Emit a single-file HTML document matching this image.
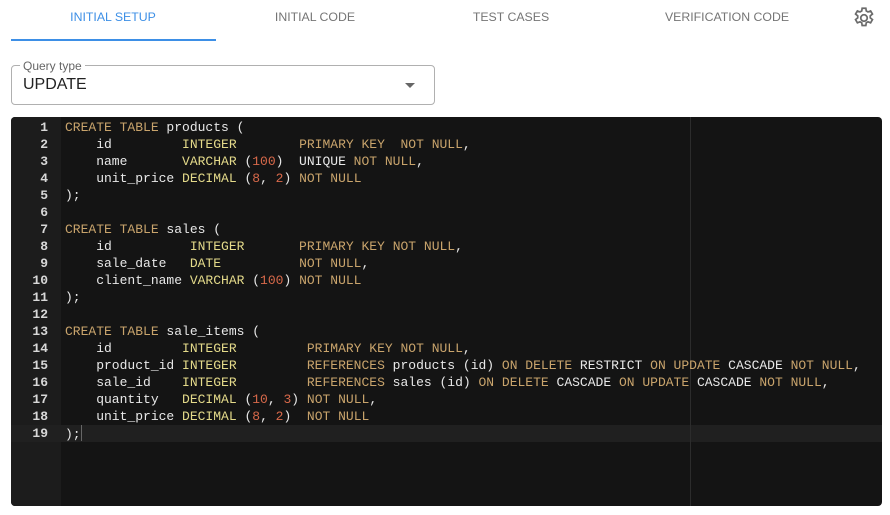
<!DOCTYPE html>
<html><head><meta charset="utf-8"><style>
body{margin:0;width:890px;height:515px;background:#fff;overflow:hidden;position:relative;font-family:"Liberation Sans",sans-serif}
.tab{position:absolute;top:10px;font-size:12.3px;color:#757575;text-align:center;width:200px}
.ul{position:absolute;left:11px;top:39px;width:205px;height:2px;background:#3d8fe6}
.sel{position:absolute;left:11px;top:65px;width:422px;height:38px;border:1px solid #b0b0b0;border-radius:4px}
.lbl{position:absolute;left:20px;top:59px;font-size:12px;color:#666;background:#fff;padding:0 3px}
.val{position:absolute;left:23px;top:76px;font-size:16px;color:#222}
.arr{position:absolute;left:405px;top:83px;width:0;height:0;border-left:5px solid transparent;border-right:5px solid transparent;border-top:5px solid #666}
.ed{position:absolute;left:11px;top:117px;width:871px;height:389px;background:#141414;border-radius:4px;overflow:hidden}
.gut{position:absolute;left:0;top:0;width:50px;height:389px;background:#1c1c1c}
.act{position:absolute;left:0;top:308px;width:871px;height:17px;background:#202020}
.rul{position:absolute;left:679px;top:0;width:1px;height:389px;background:#2c2c2c}
pre{margin:0;position:absolute;font-family:"Liberation Mono",monospace;font-size:13px;line-height:17px;color:#e8e8e8}
.ln{left:0;top:2px;width:37px;text-align:right;color:#d8d8d8;font-weight:bold}
.code{left:54px;top:2px}
.k{color:#c9a46c}.t{color:#e4da8a}.n{color:#d8694a}
.cur{display:inline-block;width:1px;height:16px;background:#666;vertical-align:-3px}
</style></head><body>
<div class="tab" style="left:13px;color:#3d8fe6">INITIAL SETUP</div>
<div class="tab" style="left:215px">INITIAL CODE</div>
<div class="tab" style="left:411px">TEST CASES</div>
<div class="tab" style="left:627px">VERIFICATION CODE</div>
<div class="ul"></div>
<svg style="position:absolute;left:851px;top:5px" width="26" height="26" viewBox="0 0 24 24"><g fill="none" stroke="#6b6b6b" stroke-width="1.6"><path d="M10.3 3h3.4l.4 2.5 1.6.9 2.4-.9 1.7 2.9-2 1.6v1.9l2 1.6-1.7 2.9-2.4-.9-1.6.9-.4 2.5h-3.4l-.4-2.5-1.6-.9-2.4.9-1.7-2.9 2-1.6v-1.9l-2-1.6 1.7-2.9 2.4.9 1.6-.9z"/><circle cx="12" cy="12" r="3"/></g></svg>
<div class="sel"></div><div class="lbl">Query type</div><div class="val">UPDATE</div><div class="arr"></div>
<div class="ed"><div class="gut"></div><div class="act"></div><div class="rul"></div>
<pre class="ln">1
2
3
4
5
6
7
8
9
10
11
12
13
14
15
16
17
18
19</pre>
<pre class="code"><span class="k">CREATE TABLE</span> products (
    id         <span class="t">INTEGER</span>        <span class="k">PRIMARY KEY</span>  <span class="k">NOT NULL</span>,
    name       <span class="t">VARCHAR</span> (<span class="n">100</span>)  UNIQUE <span class="k">NOT NULL</span>,
    unit_price <span class="t">DECIMAL</span> (<span class="n">8</span>, <span class="n">2</span>) <span class="k">NOT NULL</span>
);

<span class="k">CREATE TABLE</span> sales (
    id          <span class="t">INTEGER</span>       <span class="k">PRIMARY KEY</span> <span class="k">NOT NULL</span>,
    sale_date   <span class="t">DATE</span>          <span class="k">NOT NULL</span>,
    client_name <span class="t">VARCHAR</span> (<span class="n">100</span>) <span class="k">NOT NULL</span>
);

<span class="k">CREATE TABLE</span> sale_items (
    id         <span class="t">INTEGER</span>         <span class="k">PRIMARY KEY</span> <span class="k">NOT NULL</span>,
    product_id <span class="t">INTEGER</span>         <span class="k">REFERENCES</span> products (id) <span class="k">ON DELETE</span> RESTRICT <span class="k">ON UPDATE</span> CASCADE <span class="k">NOT NULL</span>,
    sale_id    <span class="t">INTEGER</span>         <span class="k">REFERENCES</span> sales (id) <span class="k">ON DELETE</span> CASCADE <span class="k">ON UPDATE</span> CASCADE <span class="k">NOT NULL</span>,
    quantity   <span class="t">DECIMAL</span> (<span class="n">10</span>, <span class="n">3</span>) <span class="k">NOT NULL</span>,
    unit_price <span class="t">DECIMAL</span> (<span class="n">8</span>, <span class="n">2</span>)  <span class="k">NOT NULL</span>
);<span class="cur"></span></pre>
</div>
</body></html>
